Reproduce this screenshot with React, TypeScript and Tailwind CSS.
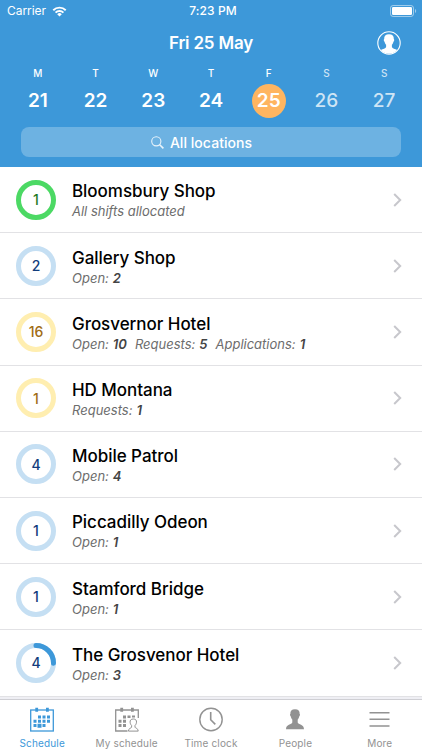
import React from "react";
import clsx from "clsx";

type Detail = { label: string; value?: number };

type Location = {
  name: string;
  count: number;
  tone: "green" | "blue" | "yellow";
  progress?: number;
  details: Detail[];
};

const days = [
  { letter: "M", date: 21 },
  { letter: "T", date: 22 },
  { letter: "W", date: 23 },
  { letter: "T", date: 24 },
  { letter: "F", date: 25, selected: true },
  { letter: "S", date: 26, weekend: true },
  { letter: "S", date: 27, weekend: true },
];

const locations: Location[] = [
  { name: "Bloomsbury Shop", count: 1, tone: "green", details: [{ label: "All shifts allocated" }] },
  { name: "Gallery Shop", count: 2, tone: "blue", details: [{ label: "Open:", value: 2 }] },
  {
    name: "Grosvernor Hotel",
    count: 16,
    tone: "yellow",
    details: [
      { label: "Open:", value: 10 },
      { label: "Requests:", value: 5 },
      { label: "Applications:", value: 1 },
    ],
  },
  { name: "HD Montana", count: 1, tone: "yellow", details: [{ label: "Requests:", value: 1 }] },
  { name: "Mobile Patrol", count: 4, tone: "blue", details: [{ label: "Open:", value: 4 }] },
  { name: "Piccadilly Odeon", count: 1, tone: "blue", details: [{ label: "Open:", value: 1 }] },
  { name: "Stamford Bridge", count: 1, tone: "blue", details: [{ label: "Open:", value: 1 }] },
  { name: "The Grosvenor Hotel", count: 4, tone: "blue", progress: 0.25, details: [{ label: "Open:", value: 3 }] },
];

const tones = {
  green: { ring: "#4cd964", text: "text-[#1f7a1f]" },
  blue: { ring: "#c5dff3", text: "text-[#123c7c]" },
  yellow: { ring: "#ffeeb0", text: "text-[#a06c14]" },
};

const WifiIcon = () => (
  <svg width="15" height="11" viewBox="0 0 16 12" fill="none" stroke="white" strokeWidth="2.1">
    <path d="M1.2 4.6a9.6 9.6 0 0 1 13.6 0" />
    <path d="M3.7 7.2a6.1 6.1 0 0 1 8.6 0" />
    <path d="M8 11.4 5.5 8.9a3.5 3.5 0 0 1 5 0z" fill="white" stroke="none" />
  </svg>
);

const BatteryIcon = () => (
  <svg width="27" height="12" viewBox="0 0 27 12" fill="none">
    <rect x="0.5" y="0.5" width="23" height="11" rx="2.6" stroke="white" strokeOpacity="0.5" />
    <rect x="2" y="2" width="20" height="8" rx="1.2" fill="white" />
    <path d="M25 4c1.6.6 1.6 3.4 0 4z" fill="white" fillOpacity="0.5" />
  </svg>
);

const AvatarIcon = () => (
  <svg width="24" height="24" viewBox="0 0 24 24" fill="none">
    <circle cx="12" cy="12" r="11.2" stroke="white" strokeWidth="1.1" />
    <path
      d="M12 3.3c-3.4 0-5 1.9-4.8 4.7-.7.6-.4 2.2.4 2.8.3 1.4.8 2.3 1.5 3V16c-.4 1.7-3.300 1.800-5.200 3A10.600 10.600 0 0 0 12 22.800c3.200 0 6.200-1.500 8.100-3.800-1.900-1.200-4.800-1.300-5.200-3v-2.200c.7-.7 1.200-1.600 1.500-3 .8-.6 1.100-2.200.4-2.800.2-2.800-1.400-4.700-4.800-4.700z"
      fill="white"
    />
  </svg>
);

const SearchIcon = () => (
  <svg width="13" height="13" viewBox="0 0 13 13" fill="none" stroke="white" strokeOpacity="0.85">
    <circle cx="5.3" cy="5.3" r="4.6" strokeWidth="1.1" />
    <path d="m8.7 8.7 3.7 3.7" strokeWidth="1.6" />
  </svg>
);

const ChevronIcon = () => (
  <svg width="9" height="14" viewBox="0 0 9 14" fill="none" stroke="#c7c7cc" strokeWidth="2">
    <path d="m1.2 1 6 6-6 6" />
  </svg>
);

const CalendarIcon = () => (
  <svg width="24" height="25" viewBox="0 0 24 25" fill="currentColor">
    <rect x="0.7" y="3" width="22.6" height="21" fill="none" stroke="currentColor" strokeWidth="1.3" />
    <path d="M5.3.8h2.8v4H5.3zM16 .8h2.8v4H16z" />
    <path d="M8 8.5h3v3H8zM12.5 8.5h3v3h-3zM17 8.5h3v3h-3zM3.500 12.800h3v3h-3zM8 12.800h3v3H8zM12.500 12.800h3v3h-3zM17 12.800h3v3h-3zM3.500 17.100h3v3h-3zM7.500 16.700h4v4h-4zM12.500 17.100h3v3h-3z" />
  </svg>
);

const MyCalendarIcon = () => (
  <svg width="24" height="25" viewBox="0 0 24 25" fill="currentColor">
    <path d="M12.5 24H.7V3h22.6v8" fill="none" stroke="currentColor" strokeWidth="1.3" />
    <path d="M5.3.8h2.8v4H5.3zM16 .8h2.8v4H16z" />
    <path d="M8 8.5h3v3H8zM12.5 8.5h3V11h-3zM17 8.5h3v2h-3zM3.500 12.800h3v3h-3zM8 12.800h3v3H8zM3.500 17.100h3v3h-3zM8 17.100h3v3H8z" />
    <path
      d="M18.300 12c-2.300 0-3.400 1.300-3.200 3.200.1 1.600.8 2.600 1.500 3.300v1.700c-.5 1.300-3.200.9-3.200 3.900h9.800c0-3-2.700-2.600-3.200-3.900v-1.700c.7-.7 1.400-1.700 1.500-3.300.2-1.900-.9-3.200-3.200-3.200z"
      fill="white"
      stroke="currentColor"
      strokeWidth="1"
    />
  </svg>
);

const ClockIcon = () => (
  <svg width="24" height="25" viewBox="0 0 24 25" fill="none" stroke="currentColor" strokeWidth="1.4">
    <circle cx="12" cy="12.5" r="11.2" />
    <path d="M11.7 5v7.700l4.600 4.700" strokeWidth="1.6" />
  </svg>
);

const PeopleIcon = () => (
  <svg width="24" height="25" viewBox="0 0 24 25" fill="currentColor">
    <path d="M12 2.300c-3.400 0-4.900 1.800-4.600 4.500-.7.600-.4 2.100.4 2.700.3 1.400.8 2.300 1.500 3v3c-.6 2.200-6.300 1.600-6.300 6.800h18c0-5.200-5.700-4.600-6.300-6.800v-3c.7-.7 1.200-1.600 1.500-3 .8-.6 1.100-2.100.4-2.700.3-2.700-1.200-4.500-4.600-4.500z" />
  </svg>
);

const MenuIcon = () => (
  <svg width="24" height="25" viewBox="0 0 24 25" fill="none" stroke="currentColor" strokeWidth="1.5">
    <path d="M1.5 5.7h20M1.5 12.3h20M1.5 18.9h20" />
  </svg>
);

const tabs = [
  { label: "Schedule", icon: CalendarIcon, active: true },
  { label: "My schedule", icon: MyCalendarIcon },
  { label: "Time clock", icon: ClockIcon },
  { label: "People", icon: PeopleIcon },
  { label: "More", icon: MenuIcon },
];

const CountRing: React.FC<{ location: Location }> = ({ location }) => {
  const { ring, text } = tones[location.tone];
  const radius = 17.5;
  const length = 2 * Math.PI * radius;

  return (
    <div className="grid size-10 shrink-0 place-items-center">
      <svg className="col-start-1 row-start-1" width="40" height="40" viewBox="0 0 40 40" fill="none">
        <circle cx="20" cy="20" r={radius} stroke={ring} strokeWidth="5" />
        {location.progress && (
          <circle
            cx="20"
            cy="20"
            r={radius}
            stroke="#3d98d9"
            strokeWidth="5"
            strokeLinecap="round"
            strokeDasharray={`${length * location.progress} ${length}`}
            transform="rotate(-90 20 20)"
          />
        )}
      </svg>
      <span className={clsx("col-start-1 row-start-1 pt-px text-[14px] leading-none font-medium", text)}>
        {location.count}
      </span>
    </div>
  );
};

const LocationRow: React.FC<{ location: Location }> = ({ location }) => (
  <li className="flex h-[66.2px] items-center border-b border-[#e2e2e5] pr-5 pl-4">
    <CountRing location={location} />
    <div className="ml-4 flex-1 pt-[3.6px]">
      <h2 className="text-[17px] leading-[21px] font-medium tracking-[-0.04px] text-black">{location.name}</h2>
      <p className="flex gap-2 text-[13px] leading-[19px] text-[#6d6d6d] italic">
        {location.details.map((detail) => (
          <span key={detail.label}>
            {detail.label}
            {detail.value !== undefined && (
              <b className="ml-1 font-semibold text-[#444444]">{detail.value}</b>
            )}
          </span>
        ))}
      </p>
    </div>
    <ChevronIcon />
  </li>
);

export default function App() {
  return (
    <div className="flex h-[750px] w-[422px] flex-col overflow-hidden bg-[#efeff4] font-['Inter',sans-serif]">
      <header className="h-[167px] shrink-0 bg-[#3d98d9] text-white">
        {/* Status bar */}
        <div className="grid h-[22px] grid-cols-3 items-center pr-[5px] pl-[7px] text-[12px]">
          <div className="flex items-center gap-1.5">
            <span className="tracking-[-0.05px]">Carrier</span>
            <WifiIcon />
          </div>
          <span className="pl-0.5 text-center font-medium tracking-[0.1px]">7:23 PM</span>
          <div className="justify-self-end">
            <BatteryIcon />
          </div>
        </div>

        <div className="grid h-[42px] grid-cols-[1fr_auto_1fr] items-center px-[21px]">
          <h1 className="col-start-2 pt-0.5 text-[17px] font-semibold tracking-[-0.2px]">Fri 25 May</h1>
          <div className="justify-self-end">
            <AvatarIcon />
          </div>
        </div>

        {/* Week picker */}
        <div className="grid grid-cols-7 px-[9px]">
          {days.map((day) => (
            <div
              key={day.date}
              className={clsx("flex flex-col items-center", day.weekend && "text-white/75")}
            >
              <span className="h-5 text-[10px] leading-[18px] font-medium">{day.letter}</span>
              <span
                className={clsx(
                  "grid size-[34px] place-items-center rounded-full text-[19px]",
                  day.weekend ? "font-medium" : "font-semibold",
                  day.selected && "bg-[#ffb560]"
                )}
              >
                {day.date}
              </span>
            </div>
          ))}
        </div>

        <div className="mx-[21px] mt-[9px] flex h-[30px] items-center justify-center gap-[6px] rounded-lg bg-white/25 pr-[19px] text-[14px]">
          <SearchIcon />
          <span className="font-medium tracking-[0.05px]">All locations</span>
        </div>
      </header>

      <ul className="shrink-0 bg-white">
        {locations.map((location) => (
          <LocationRow key={location.name} location={location} />
        ))}
      </ul>

      <nav className="mt-[2.4px] grid flex-1 grid-cols-5 border-t border-[#cfcfd4] bg-white">
        {tabs.map(({ label, icon: Icon, active }) => (
          <div
            key={label}
            className={clsx(
              "flex flex-col items-center pt-[7px]",
              active ? "text-[#3d98d9]" : "text-[#929292]"
            )}
          >
            <Icon />
            <span className="mt-1 text-[10px] leading-[14px] tracking-[0.15px]">{label}</span>
          </div>
        ))}
      </nav>
    </div>
  );
}
